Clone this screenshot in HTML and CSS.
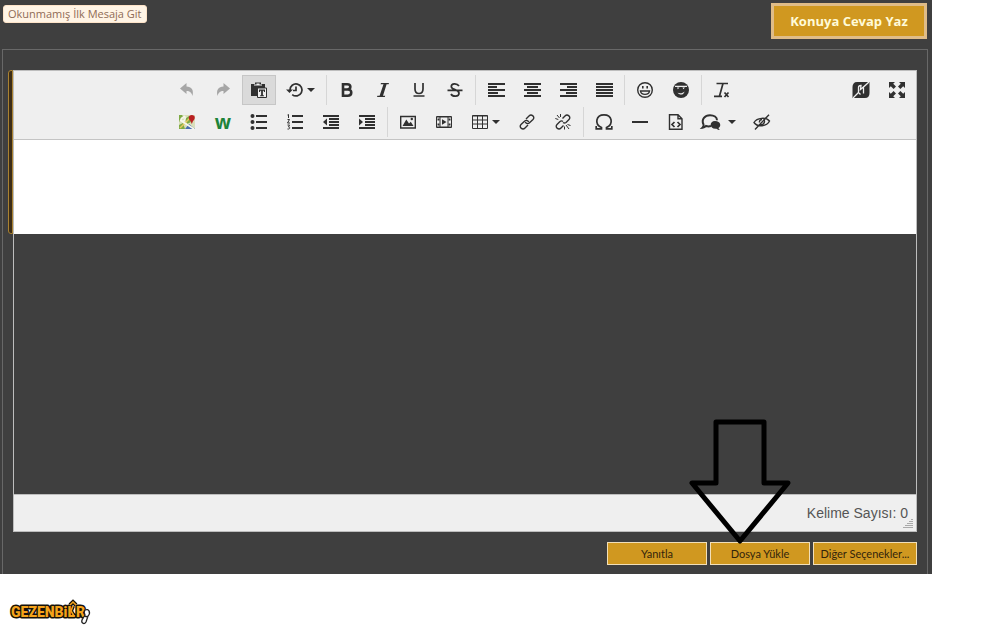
FILE: index.html
```html
<!DOCTYPE html>
<html lang="tr">
<head>
<meta charset="utf-8">
<title>Konuya Cevap Yaz</title>
<link rel="stylesheet" href="styles.css">
</head>
<body>
<main class="page">
  <header class="topbar">
    <a class="unread" href="#">Okunmamış İlk Mesaja Git</a>
    <button class="reply" type="button">Konuya Cevap Yaz</button>
  </header>
  <section class="frame">
    <div class="composer">
      <div class="accent"></div>
      <div class="editor">
        <div class="toolbar">
          <div class="tools">
            <div class="row">
              <button class="tool faded" type="button" aria-label="Geri al"><svg width="16" height="16"><path d="M1 6.500 7.500 1v3.500C12.500 4.500 15 8 13.500 14 12.500 10.500 11 9 7.500 9v3z"/></svg></button>
              <button class="tool faded" type="button" aria-label="Yinele"><svg width="16" height="16"><path d="M15 6.500 8.500 1v3.500C3.500 4.500 1 8 2.500 14 3.500 10.500 5 9 8.500 9v3z"/></svg></button>
              <button class="tool active" type="button" aria-label="Düz metin yapıştır"><svg width="18" height="18"><path d="M1 3h4V1.500h6V3h4v4H7v8H1z"/><path class="light" d="M4 3.500h8v1H4zM6.500 2.500h3v1h-3z"/><path class="paper" d="M7.500 7h9v9.500h-9z"/><path d="M9 8.500h6v2.500h-1l-.3-1.300h-.8v4.600h1v.9h-3.800v-.9h1V9.700h-.8L10 11H9z"/></svg></button>
              <button class="tool drop" type="button" aria-label="Taslaklar"><svg width="17" height="16"><path class="thick" d="M4 8a6 6 0 1 1 2.200 4.600M10 4.500V8.500H7"/><path d="M0 7.500h7L3.500 11z"/></svg><i class="caret"></i></button>
              <span class="sep"></span>
              <button class="tool" type="button" aria-label="Kalın"><svg width="16" height="16"><path class="heavy" d="M4 2.200h4.200c4.200 0 4.200 5.300 0 5.300H4h5c4.500 0 4.300 6.300-.3 6.300H4z"/></svg></button>
              <button class="tool" type="button" aria-label="İtalik"><svg width="16" height="16"><path d="M6 1h8l-.4 1.200h-2L8 13.800h2.200l-.4 1.200H2l.4-1.200h2.200L8.500 2.200H5.600z"/></svg></button>
              <button class="tool" type="button" aria-label="Altı çizili"><svg width="16" height="16"><path class="thick" d="M4 1v6c0 6 8 6 8 0V1M2.500 14h11"/></svg></button>
              <button class="tool" type="button" aria-label="Üstü çizili"><svg width="16" height="16"><path class="thick" d="M12 4C10 1 4.300 1.200 4.300 4.500 4.300 8.300 12 7 12 11.300 12 15 5.500 15 4 12M.5 8.300h15"/></svg></button>
              <span class="sep"></span>
              <button class="tool" type="button" aria-label="Sola yasla"><svg width="17" height="16"><path class="bars" d="M0 2h17M0 5h9M0 8h17M0 11h10M0 14h17"/></svg></button>
              <button class="tool" type="button" aria-label="Ortala"><svg width="17" height="16"><path class="bars" d="M0 2h17M3 5h11M0 8h17M3 11h11M0 14h17"/></svg></button>
              <button class="tool" type="button" aria-label="Sağa yasla"><svg width="17" height="16"><path class="bars" d="M0 2h17M7 5h10M0 8h17M6 11h11M0 14h17"/></svg></button>
              <button class="tool" type="button" aria-label="İki yana yasla"><svg width="17" height="16"><path class="bars" d="M0 2h17M0 5h17M0 8h17M0 11h17M0 14h17"/></svg></button>
              <span class="sep"></span>
              <button class="tool" type="button" aria-label="İfadeler"><svg width="16" height="16"><circle class="line" cx="8" cy="8" r="7.300"/><path d="M5 4h1.600v2.500H5zM9.400 4H11v2.500H9.400z"/><path class="line" d="M3.500 9h9C12 13.500 4 13.500 3.500 9z"/></svg></button>
              <button class="tool" type="button" aria-label="Özel ifadeler"><svg width="16" height="16"><circle cx="8" cy="8" r="8"/><path class="light" d="M2 3.800h12v1.200H2zM4 5.500h2.500L4.800 7.200zM9.500 5.500H12l-1.700 1.700zM4.500 10.800c3 1 5.500.3 7-1.300-.5 3.300-4.500 4.300-7 1.300z"/></svg></button>
              <span class="sep"></span>
              <button class="tool" type="button" aria-label="Biçimlendirmeyi temizle"><svg width="16" height="16"><path class="thick" d="M2.500 1.500H14M9 1.500 5.500 14M0 14.300h8"/><path class="thick" d="m10.500 10.500 4 4.500m0-4.500-4 4.500"/></svg></button>
            </div>
            <div class="row">
              <button class="tool" type="button" aria-label="Harita"><svg width="16" height="16"><path fill="#d9dfba" d="M0 1h16v14H0z"/><path fill="#7eaa45" d="M0 1h5L0 8zM10 2l2 6-4 2-2-5zM0 11l4-2 2 6H0z"/><path fill="none" stroke="#e8c860" stroke-width="1.500" d="M1 14 12 3"/><path fill="#4a6eb0" d="m10 10 6 5H6z"/><path fill="none" stroke="#f7f7ed" stroke-width="1.500" d="m1 6 14 9M3.500 2C7 1 7 7 4 7S1.500 3 5 4"/><path fill="#b91f22" d="M12.800 1c3.700 0 3.800 4 1.200 6l-1.200 3-1.200-3c-2.600-2-2.500-6 1.200-6z"/></svg></button>
              <button class="tool wiki" type="button">w</button>
              <button class="tool" type="button" aria-label="Madde listesi"><svg width="16" height="16"><circle cx="1.500" cy="2" r="2"/><circle cx="1.500" cy="8" r="2"/><circle cx="1.500" cy="14" r="2"/><path class="bars" d="M5 2h11M5 8h11M5 14h11"/></svg></button>
              <button class="tool" type="button" aria-label="Numaralı liste"><svg width="16" height="16"><path class="thin" d="m.5 1 1-.5V4M.5 5.500h2L.5 9h2.500M.5 11h2L1.500 13c2 0 1.500 2.500-1 2"/><path class="bars" d="M5 2h11M5 8h11M5 14h11"/></svg></button>
              <button class="tool" type="button" aria-label="Girintiyi azalt"><svg width="16" height="16"><path class="bars" d="M0 2h16M6 5h10M6 8h10M6 11h10M0 14h16"/><path d="M4 4.500v7L0 8z"/></svg></button>
              <button class="tool" type="button" aria-label="Girintiyi artır"><svg width="16" height="16"><path class="bars" d="M0 2h16M6 5h10M6 8h10M6 11h10M0 14h16"/><path d="M0 4.500v7L4 8z"/></svg></button>
              <span class="sep"></span>
              <button class="tool" type="button" aria-label="Resim ekle"><svg width="16" height="16"><path class="line" d="M.7 2.500h14.600v11.500H.7z"/><path d="m2.500 12 3.800-6.500L9 9.500l1.800-1.800L13.500 12z"/><circle cx="11.800" cy="5" r="1.200"/></svg></button>
              <button class="tool" type="button" aria-label="Video ekle"><svg width="16" height="16"><path class="thin" d="M.5 2.500h15v11H.5zM4 2.500v11M12 2.500v11M1 13h14M1 3h14"/><path d="M1.500 4.500h2v2h-2zM1.500 9.500h2v2h-2zM12.500 4.500h2v2h-2zM12.500 9.500h2v2h-2zM6 5.200v5.600L10.500 8z"/></svg></button>
              <button class="tool drop" type="button" aria-label="Tablo"><svg width="16" height="16"><path class="thin" d="M.5 1.500h15v13H.5zM.5 2h15M.5 6h15M.5 10h15M5.500 2v12M10.500 2v12"/></svg><i class="caret"></i></button>
              <button class="tool" type="button" aria-label="Bağlantı ekle"><svg width="16" height="16"><g class="line"><path d="m7 5 3-3c2.500-2.500 6.500 1 4 3.500l-3.500 3.300c-1.300 1.300-3.500 1-4.200-.8"/><path d="m9 11-3 3c-2.500 2.500-6.500-1-4-3.500l3.500-3.300c1.300-1.300 3.500-1 4.200.8"/></g></svg></button>
              <button class="tool" type="button" aria-label="Bağlantıyı kaldır"><svg width="16" height="16"><path class="line" d="m7.500 4.500 2.500-2.500c2.500-2.500 6.500 1 4 3.500l-3 3M8.500 11.500 6 14c-2.500 2.500-6.500-1-4-3.500l3-3M8 8.500c1 .7 2 .7 3 0M5 7.500c1-.8 2-.8 3 0"/><path class="thin" d="m2 1 2.500 3M5.500 0v3M.3 4.500l3 1M11 11l3 4M9.500 12.500v3M12.500 10.500l3 1"/></svg></button>
              <span class="sep"></span>
              <button class="tool" type="button" aria-label="Özel karakter"><svg width="18" height="18"><path class="thick" d="M1.200 13v2.800h5.300v-1.300C-1 11 1 1.800 9 1.800s10 9.200 2.500 12.700v1.300h5.300V13"/></svg></button>
              <button class="tool" type="button" aria-label="Yatay çizgi"><svg width="16" height="16"><path class="bars" d="M0 8h16"/></svg></button>
              <button class="tool" type="button" aria-label="Kaynak kodu"><svg width="16" height="16"><path class="line" d="M1.500.7H10l4 4v10.600H1.500zM10 .7v4h4"/><path class="thick" d="M6.500 8 4 10.500 6.500 13M9.500 8l2.500 2.500L9.500 13"/></svg></button>
              <button class="tool drop quote" type="button" aria-label="Alıntı"><svg width="18" height="16"><path class="bars" d="M9 12c-2 .7-3.500.5-5 0-1 1-2 1.500-3.500 1.700 1-1 1.400-2 1-3.200C-1 5 3 1.200 8 1.200c4 0 7 2 7 5"/><path d="M13 7c6 0 6.500 5.500 3.500 7 .2.800.5 1.300 1.500 2-1.500 0-2.500-.4-3.500-1.200C7 15.500 7 7 13 7z"/></svg><i class="caret"></i></button>
              <button class="tool" type="button" aria-label="Önizleme"><svg width="18" height="16"><path class="line" d="M1 8.500c3-5 12-5.500 15.500-1.500C14 12.500 4.500 13.500 1 8.500zM2 15.500 16 .7"/><path class="line" d="M11 5.500c1.500 3-1 6-4 4.800M6.500 8.500c-.3-2 1-3 2.500-3"/></svg></button>
            </div>
          </div>
          <div class="view">
            <button class="tool" type="button" aria-label="BB kodunu değiştir"><svg width="18" height="18"><path d="M5 1h12.500v11c0 3-1.500 5-4.500 5H.500V6C.5 3 2 1 5 1z"/><path class="cut" d="M1 17 6.500 11.500V6.500C6.500 5 8 4.500 9 4.500L8.500 8.500 11.500 6V12.500M8.500 13.500 7 12M11.500 6 17 1"/></svg></button>
            <button class="tool" type="button" aria-label="Tam ekran"><svg width="16" height="16"><path d="M0 0h6L4.200 1.800 7 4.600 4.600 7 1.800 4.200 0 6zM16 0v6l-1.800-1.800L11.400 7 9 4.600l2.800-2.800L10 0zM0 16v-6l1.800 1.800L4.600 9 7 11.400l-2.800 2.800L6 16zM16 16h-6l1.800-1.800L9 11.400 11.400 9l2.800 2.800L16 10z"/></svg></button>
          </div>
        </div>
        <div class="text" contenteditable="true" role="textbox" aria-label="Mesaj"></div>
        <div class="blank"></div>
        <footer class="status">
          <span>Kelime Sayısı: 0</span>
          <svg class="grip" width="10" height="10"><path d="M8 1.500h2M6 3.500h4M4 5.500h6M2 7.500h8M0 9.500h10"/></svg>
        </footer>
      </div>
    </div>
    <div class="actions">
      <button class="action" type="button">Yanıtla</button>
      <button class="action upload" type="button">Dosya Yükle</button>
      <button class="action more" type="button">Diğer Seçenekler...</button>
    </div>
  </section>
  <svg class="pointer" width="104" height="126"><path d="M28 4h48v61h24l-48 58L4 65h24z"/></svg>
</main>
<footer class="brand">
  <svg width="84" height="28" role="img" aria-label="Gezenbilir">
    <path class="walker-edge" d="M61 6l3-3 3 3M64 7l-2 5 3 5"/>
    <text x="2" y="18">GEZENBiL</text>
    <text x="67" y="18">R</text>
    <path class="walker" d="M61 6l3-3 3 3M64 7l-2 5 3 5"/>
    <path class="foot" d="M76 11c4-2 6 3 3 6l-2 6c-2 3-5 1-4-2l3-5c-1-2-1-4 0-5zM75 17l4 1"/>
  </svg>
</footer>
</body>
</html>
```
FILE: styles.css
```css
* { box-sizing: border-box; }
body { margin: 0; background: #fff; font-family: "Open Sans", sans-serif; }
button { font-family: inherit; margin: 0; cursor: pointer; }

.page { position: relative; margin-right: 76px; background: #3f3f3f; }
.topbar { display: flex; justify-content: space-between; align-items: flex-start; padding: 3px 5px 10px 3px; }
.unread { margin-top: 2px; padding: 0 4px; border: 1px solid #fde3c8; border-radius: 3px; background: #fff4e5; color: #8f6b55; font-size: 11px; line-height: 16px; text-decoration: none; }
.reply { width: 156px; height: 36px; padding: 0; border: 3px solid #dfbc88; background: #d09820; color: #fffbd8; font-size: 13px; font-weight: 700; }

.frame { margin: 0 4px 0 2px; padding: 20px 10px 9px 5px; border: solid #686868; border-width: 1px 1px 0; }
.composer { display: flex; align-items: flex-start; }
.accent { width: 5px; height: 164px; border: 1px solid #a98232; border-radius: 3px 0 0 3px; background: #3c2d17; }
.editor { flex: 1; border: 1px solid #bdbdbd; }

.toolbar { display: flex; justify-content: space-between; padding: 3px 1px 1px 155px; border-bottom: 1px solid #c4c4c4; background: #efefef; }
.row, .view { display: flex; }
.tool { display: flex; align-items: center; justify-content: center; width: 34px; height: 30px; margin: 1px; padding: 0; border: 1px solid transparent; background: none; color: #303030; }
.active { border-color: #c6c6c6; background: #dadada; }
.faded { color: #a6a6a6; }
.drop { width: 45px; gap: 4px; }
.quote { width: 48px; gap: 8px; }
.wiki { color: #1d8339; font-size: 19px; font-weight: 700; line-height: 24px; }
.sep { width: 1px; margin: 1px 2px; background: #d6d6d6; }
.caret { border: 4px solid transparent; border-top-color: currentColor; border-bottom: 0; }

.tool svg { flex: none; fill: currentColor; overflow: visible; }
.tool .line, .tool .thin, .tool .thick, .tool .heavy, .tool .bars { fill: none; stroke: currentColor; stroke-width: 1.4; }
.tool .thin { stroke-width: 1; }
.tool .thick { stroke-width: 1.7; }
.tool .bars { stroke-width: 2; }
.tool .heavy { stroke-width: 2.6; }
.tool .light { fill: #efefef; }
.tool .paper { fill: #efefef; stroke: #303030; }
.tool .cut { fill: none; stroke: #efefef; stroke-width: 1.3; }

.text { min-height: 94px; background: #fff; outline: 0; }
.blank { height: 260px; }
.status { display: flex; justify-content: flex-end; position: relative; padding: 8px 8px 8px 0; border-top: 1px solid #bdbdbd; background: #efefef; color: #555; font: 14px/20px "Liberation Sans", sans-serif; }
.grip { position: absolute; right: 3px; bottom: 3px; stroke: #aaa; }

.actions { display: flex; justify-content: flex-end; gap: 3px; margin-top: 10px; }
.action { width: 100px; height: 23px; padding: 0; border: 1px solid #f2dfb8; background: #d09820; color: #32240c; font: 11px Lato, sans-serif; white-space: nowrap; }
.more { width: 104px; }

.pointer { position: absolute; right: 140px; bottom: 30px; fill: none; stroke: #000; stroke-width: 5; stroke-linejoin: round; pointer-events: none; }

.brand { padding: 25px 9px 0; }
.brand svg { display: block; overflow: visible; }
.brand text { font: 900 14px Roboto, sans-serif; fill: #f5a31a; stroke: #17120a; stroke-width: 3; stroke-linejoin: round; paint-order: stroke; }
.walker-edge { fill: none; stroke: #17120a; stroke-width: 4; }
.walker { fill: none; stroke: #f5a31a; stroke-width: 1.5; }
.foot { fill: #fff; stroke: #222; stroke-width: 1.3; }
```
